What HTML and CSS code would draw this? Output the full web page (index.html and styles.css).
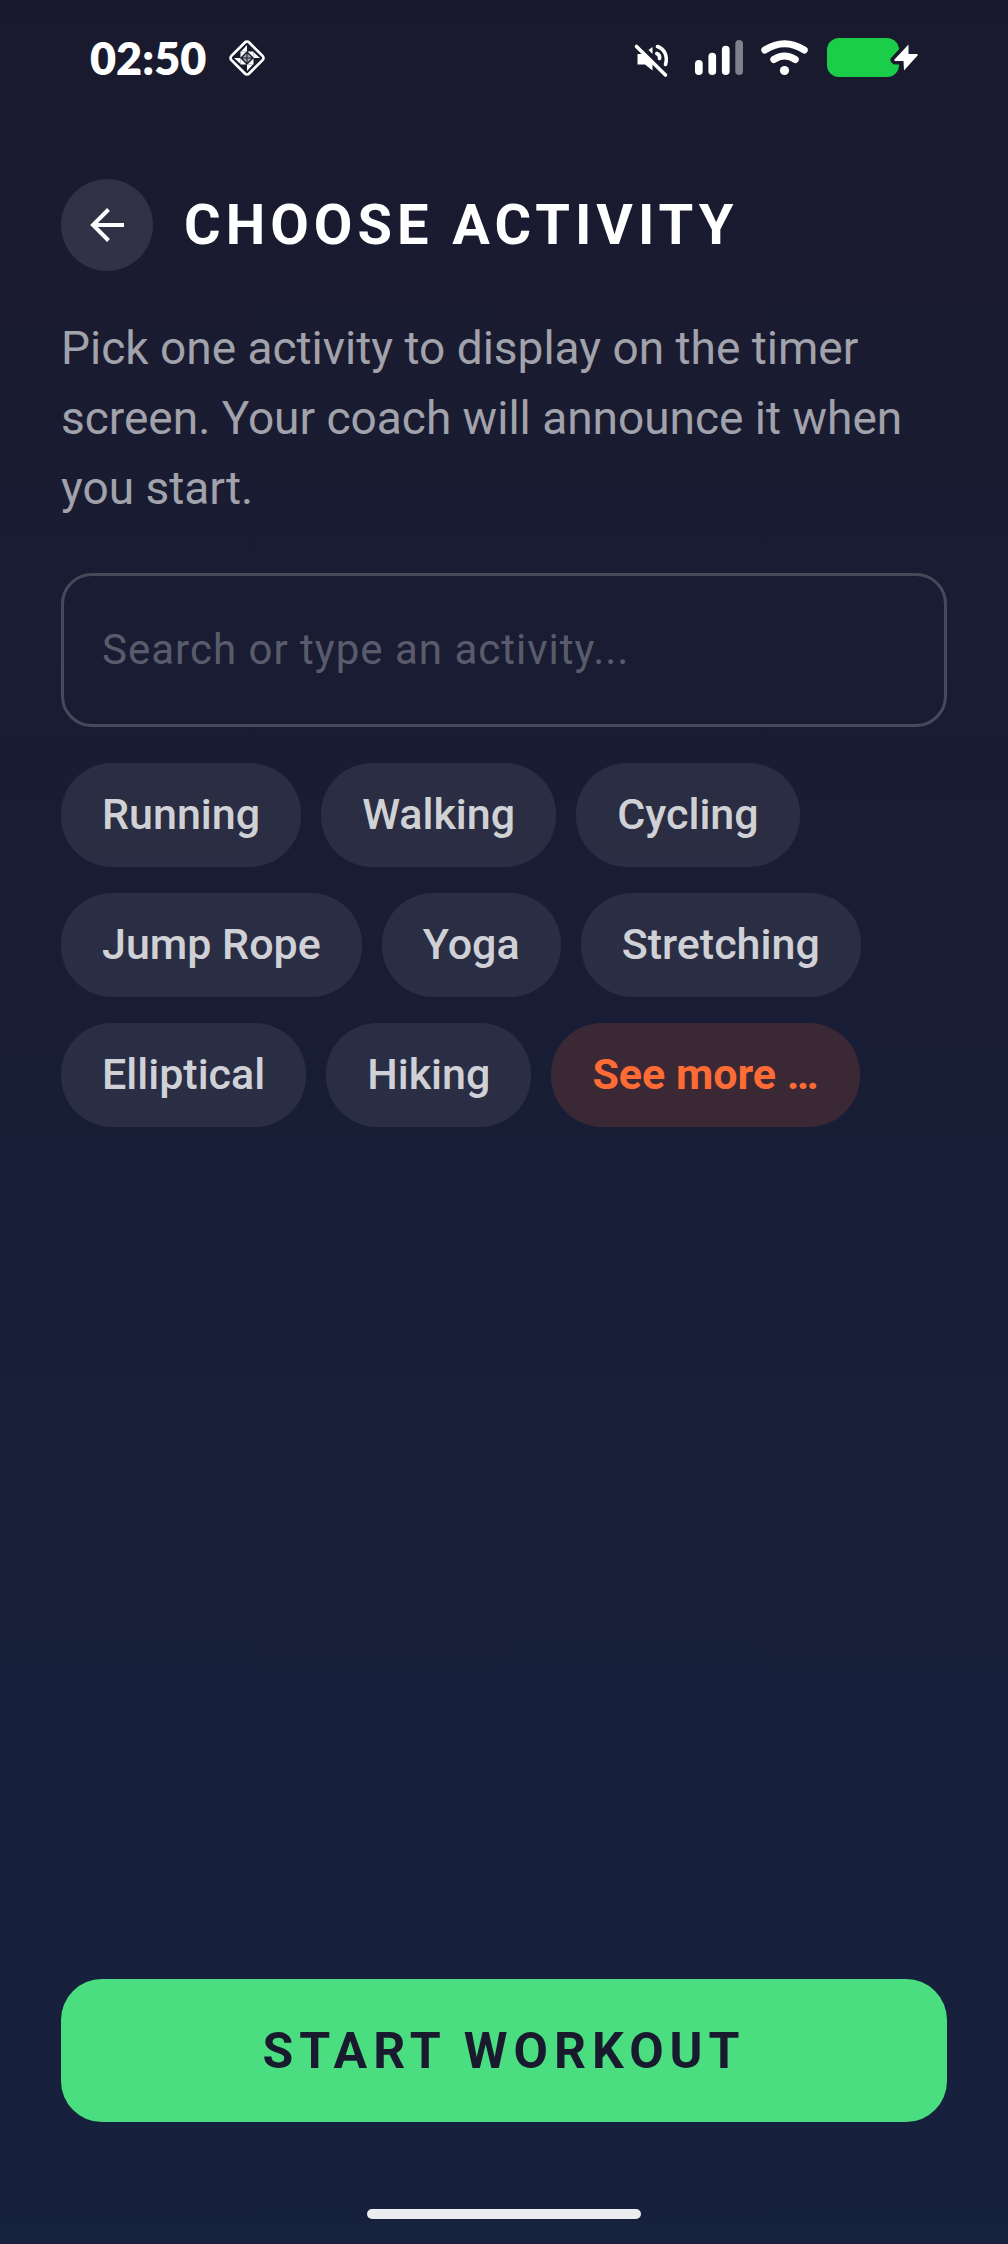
FILE: index.html
```
<!DOCTYPE html>
<html lang="en">
<head>
<meta charset="utf-8">
<meta name="viewport" content="width=device-width, initial-scale=1">
<title>Choose Activity</title>
<link rel="stylesheet" href="styles.css">
</head>
<body>
<div class="screen">
  <div class="status-bar">
    <div class="status-group status-left">
      <span class="clock">02:50</span>
      <svg class="icon" width="40" height="40" viewBox="0 0 40 40" fill="none" aria-hidden="true">
        <rect x="7.500" y="7.500" width="25" height="25" rx="3" transform="rotate(45 20 20)" stroke="#fff" stroke-width="2.700"/>
        <g id="arm" fill="#fff">
          <path d="M20 7V13.500H14Z"/>
          <path d="M13.500 13.500H19.500L13.500 19.500Z"/>
          <path d="M19.500 15.500V19.500H15.500Z" opacity=".6"/>
        </g>
        <use href="#arm" transform="rotate(90 20 20)"/>
        <use href="#arm" transform="rotate(180 20 20)"/>
        <use href="#arm" transform="rotate(270 20 20)"/>
      </svg>
    </div>
    <div class="status-group">
      <svg class="icon" width="44" height="40" viewBox="0 0 44 40" fill="none" aria-label="Muted">
        <path d="M4.500 16H10L19.500 25.500V32.500L12 26.500H4.500Z" fill="#fff"/>
        <path d="M15.500 12L19.500 9V16Z" fill="#fff"/>
        <path d="M24.500 8.500C31.500 11 35 18 32.500 26.500M23.800 15.500C26 16.500 27 18.500 26.500 20.500" stroke="#fff" stroke-width="3.600" stroke-linecap="round"/>
        <path d="M3.500 8.500L32.500 37" stroke="#fff" stroke-width="3.600" stroke-linecap="round"/>
      </svg>
      <svg class="icon" width="48" height="40" viewBox="0 0 48 40" fill="#fff" aria-label="Signal">
        <rect x="0" y="22" width="7.700" height="15" rx="3.800"/>
        <rect x="13.400" y="14.700" width="7.700" height="22.300" rx="3.800"/>
        <rect x="26.900" y="7.700" width="7.700" height="29.300" rx="3.800"/>
        <rect x="40.300" y="2" width="7.700" height="35" rx="3.800" opacity=".45"/>
      </svg>
      <svg class="icon" width="48" height="40" viewBox="0 0 48 40" fill="none" aria-label="Wi-Fi">
        <path d="M3.800 12Q23.500 -.6 43.300 12M12.800 21.500Q23.500 14.500 34.300 21.500" stroke="#fff" stroke-width="7" stroke-linecap="round"/>
        <circle cx="23.500" cy="32.500" r="4.600" fill="#fff"/>
      </svg>
      <svg class="icon" width="92" height="40" viewBox="0 0 92 40" aria-label="Battery charging">
        <rect width="72" height="39" rx="12" fill="#1bce49"/>
        <path d="M81.500 6.500L67 22L68 23H76.500L77 32.500L91 17L90 16H81.500Z" fill="#1a1a2e" stroke="#1a1a2e" stroke-width="7" stroke-linejoin="round"/>
        <path d="M81.500 6.500L67 22L68 23H76.500L77 32.500L91 17L90 16H81.500Z" fill="#fff"/>
      </svg>
    </div>
  </div>

  <main class="content">
    <header class="header">
      <button class="back" type="button" aria-label="Back">
        <svg width="36" height="36" viewBox="0 0 36 36" fill="none" stroke="#fff" stroke-width="4" aria-hidden="true">
          <path d="M35 18H4M19.500 2.500L4 18L19.500 33.500"/>
        </svg>
      </button>
      <h1 class="title">CHOOSE ACTIVITY</h1>
    </header>
    <p class="intro">Pick one activity to display on the timer screen. Your coach will announce it when you start.</p>
    <input class="search" type="text" aria-label="Activity" placeholder="Search or type an activity...">
    <div class="chips">
      <button class="chip" type="button">Running</button>
      <button class="chip" type="button">Walking</button>
      <button class="chip" type="button">Cycling</button>
      <button class="chip" type="button">Jump Rope</button>
      <button class="chip" type="button">Yoga</button>
      <button class="chip" type="button">Stretching</button>
      <button class="chip" type="button">Elliptical</button>
      <button class="chip" type="button">Hiking</button>
      <button class="chip chip-more" type="button">See more …</button>
    </div>
  </main>

  <footer class="footer">
    <button class="start" type="button">START WORKOUT</button>
    <div class="home-bar"></div>
  </footer>
</div>
</body>
</html>
```
FILE: styles.css
```
* {
  box-sizing: border-box;
}

body {
  margin: 0;
  font-family: Roboto, "Liberation Sans", sans-serif;
  color: #fff;
}

button,
input {
  font-family: inherit;
  margin: 0;
  border: 0;
}

.screen {
  min-height: 100vh;
  display: flex;
  flex-direction: column;
  background: linear-gradient(#1a1a2e, #16213e);
}

.status-bar {
  display: flex;
  justify-content: space-between;
  align-items: center;
  height: 116px;
  padding: 0 89px 0 90px;
}

.status-group {
  display: flex;
  align-items: center;
  gap: 18px;
}

.status-left {
  gap: 21px;
}

.clock {
  font-family: Lato, sans-serif;
  font-size: 45px;
  font-weight: 800;
  line-height: 52px;
}

.icon {
  display: block;
}

.content {
  flex: 1;
  padding: 63px 61px 0;
}

.header {
  display: flex;
  align-items: center;
  gap: 31px;
}

.back {
  display: flex;
  align-items: center;
  justify-content: center;
  width: 92px;
  height: 92px;
  padding: 0;
  border-radius: 50%;
  background: rgba(255, 255, 255, 0.1);
}

.title {
  margin: 0;
  font-size: 56px;
  font-weight: 700;
  line-height: 72px;
  letter-spacing: 5px;
}

.intro {
  margin: 42px 0 50px;
  font-size: 46px;
  line-height: 70px;
  color: rgba(255, 255, 255, 0.6);
}

.search {
  display: block;
  width: 100%;
  height: 154px;
  padding: 0 38px 2px;
  border: 3px solid rgba(255, 255, 255, 0.2);
  border-radius: 31px;
  background: transparent;
  color: #fff;
  font-size: 42px;
  letter-spacing: 1px;
}

.search::placeholder {
  color: rgba(255, 255, 255, 0.3);
  opacity: 1;
}

.chips {
  display: flex;
  flex-wrap: wrap;
  gap: 26px 20px;
  margin-top: 36px;
}

.chip {
  height: 104px;
  padding: 0 41px 2px;
  border-radius: 51px;
  background: rgba(255, 255, 255, 0.08);
  color: rgba(255, 255, 255, 0.8);
  font-size: 43px;
  font-weight: 500;
}

.chip-more {
  background: rgba(255, 107, 53, 0.15);
  color: #ff6b35;
  font-weight: 700;
}

.footer {
  display: flex;
  flex-direction: column;
  align-items: center;
  gap: 87px;
  padding: 40px 61px 25px;
}

.start {
  width: 100%;
  height: 143px;
  border-radius: 41px;
  background: #4ade80;
  color: #1a1a2e;
  font-size: 50px;
  font-weight: 700;
  letter-spacing: 6px;
}

.home-bar {
  width: 274px;
  height: 10px;
  border-radius: 5px;
  background: #ecedef;
}
```
